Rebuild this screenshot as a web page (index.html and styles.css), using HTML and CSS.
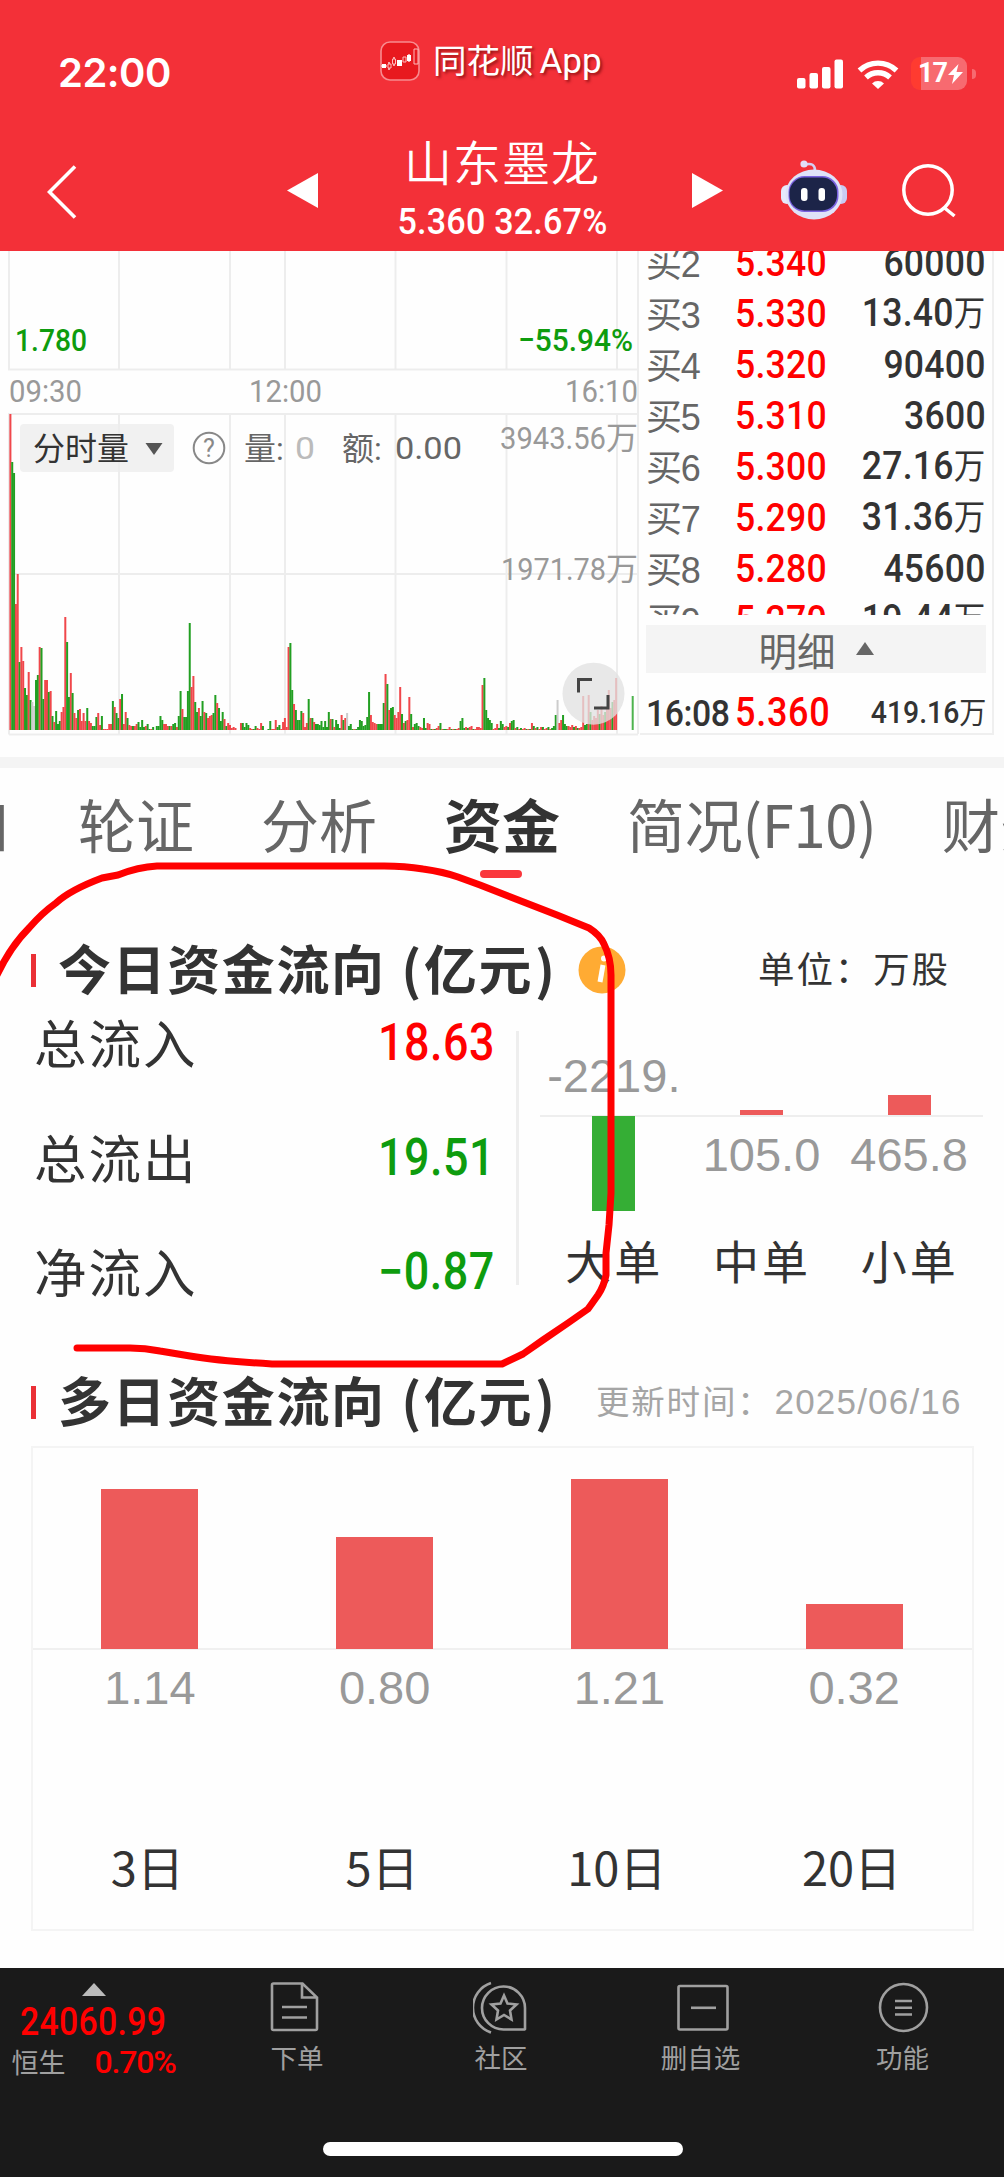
FILE: index.html
```
<!DOCTYPE html>
<html lang="zh-CN">

<head>
    <meta charset="UTF-8">
    <meta name="viewport" content="width=device-width, initial-scale=1.0">
    <title>山东墨龙</title>
    <link rel="stylesheet" href="styles.css">
</head>

<body>
    <div class="page">
        <header class="header">
            <div class="status">
                <span class="clock">22:00</span>
                <div class="brand">
                    <svg class="brand-icon" width="40" height="40" viewBox="0 0 40 40">
                        <rect x="1" y="1" width="38" height="38" rx="9" fill="#e8191f" stroke="#f88a8e" stroke-width="1.6" />
                        <path d="M1 25h6M9 21v8M14 16v9M29 13v8" stroke="#fff" stroke-width="1.2" />
                        <path d="M2 23h4v4H2zM17 19h5v6h-5zM27 14h4v6h-4z" fill="#fff" />
                        <path d="M8 23h3v4H8zM12.500 18h3v5h-3zM23 16h3v5h-3zM34 8h4v15h-4z" fill="#e8191f" stroke="#fbb" stroke-width="1" />
                    </svg>
                    <span class="brand-name">同花顺<b>App</b></span>
                </div>
                <div class="signals">
                    <svg width="46" height="30" viewBox="0 0 46 30" fill="#fff">
                        <rect x="0" y="19" width="8.500" height="10.500" rx="2" />
                        <rect x="12.500" y="14" width="8.500" height="15.500" rx="2" />
                        <rect x="25" y="8" width="8.500" height="21.500" rx="2" />
                        <rect x="37.500" y="0.500" width="8.500" height="29" rx="2" />
                    </svg>
                    <svg class="wifi" width="42" height="30" viewBox="0 0 42 30" fill="none" stroke="#fff" stroke-width="5.400">
                        <path d="M2.500 11.500a27 27 0 0 1 37 0" />
                        <path d="M9 18.500a17.500 17.500 0 0 1 24 0" />
                        <path d="M15 24.500a8.500 8.500 0 0 1 12 0L21 30z" fill="#fff" stroke="none" />
                    </svg>
                    <div class="battery">
                        <span>17</span>
                        <svg width="15" height="20" viewBox="0 0 15 20"><path d="M10.500 0L0 11h6L4 20 15 8H8.500z" fill="#fff" /></svg>
                    </div>
                </div>
            </div>
            <nav class="navbar">
                <svg class="back" width="30" height="54" viewBox="0 0 30 54" fill="none" stroke="#fff" stroke-width="3.600"><path d="M28 1.500L2.500 27 28 52.500" /></svg>
                <svg class="prev" width="31" height="35" viewBox="0 0 31 35"><path d="M31 0v35L0 17.500z" fill="#fff" /></svg>
                <div class="stock">
                    <h1>山东墨龙</h1>
                    <p>5.360 32.67%</p>
                </div>
                <svg class="next" width="31" height="35" viewBox="0 0 31 35"><path d="M0 0v35l31-17.500z" fill="#fff" /></svg>
                <svg class="robot" width="66" height="60" viewBox="0 0 66 60">
                    <path d="M24 4.500q10-2.500 10 6" fill="none" stroke="#d5cdf2" stroke-width="2.600" />
                    <circle cx="23" cy="4" r="3.600" fill="#e3def8" />
                    <rect x="0" y="25" width="12" height="19" rx="6" fill="#e6e9fb" />
                    <rect x="54" y="25" width="12" height="19" rx="6" fill="#c9cbf3" />
                    <ellipse cx="33" cy="34.500" rx="28.500" ry="25" fill="#dfe2f8" />
                    <rect x="7.500" y="16" width="50" height="36" rx="16" fill="#7a62e0" />
                    <rect x="8.500" y="17.500" width="47.500" height="33" rx="15" fill="#1c2448" />
                    <rect x="20" y="28" width="6.500" height="13" rx="3" fill="#fff" />
                    <rect x="37.500" y="28" width="6.500" height="13" rx="3" fill="#fff" />
                </svg>
                <svg class="search" width="56" height="56" viewBox="0 0 56 56" fill="none" stroke="#fff" stroke-width="3.500">
                    <circle cx="26" cy="26" r="24.200" />
                    <path d="M42 43.500L52.500 52" />
                </svg>
            </nav>
        </header>

        <section class="market">
            <svg class="minute-chart" width="640" height="487" viewBox="0 251 640 487">
                <path class="grid-line" d="M9 251V369.500H638M119 251V369M230 251V369M285 251V369M395.500 251V369M506.500 251V369M617 251V369" />
                <path class="grid-line" d="M9 734.500V414H638M9 574H638M9 734.500H638M119 414V734M230 414V734M285 414V734M395.500 414V734M506.500 414V734M617 414V734M638 251V734" />
                <g class="down">
                    <text x="15" y="350.500" textLength="72" lengthAdjust="spacingAndGlyphs">1.780</text>
                    <text x="518" y="350.500" textLength="115" lengthAdjust="spacingAndGlyphs">−55.94%</text>
                </g>
                <g class="axis">
                    <text x="9" y="401.500" textLength="73" lengthAdjust="spacingAndGlyphs">09:30</text>
                    <text x="249" y="401.500" textLength="73" lengthAdjust="spacingAndGlyphs">12:00</text>
                    <text x="565" y="401.500" textLength="73" lengthAdjust="spacingAndGlyphs">16:10</text>
                    <text x="500" y="448.500" textLength="106" lengthAdjust="spacingAndGlyphs">3943.56</text>
                    <text x="606" y="449">万</text>
                    <text x="501" y="580" textLength="105" lengthAdjust="spacingAndGlyphs">1971.78</text>
                    <text x="606" y="580">万</text>
                </g>
                <g id="volume"></g>
                <rect x="20" y="424" width="154" height="48" rx="4" fill="#f1f1f1" />
                <path class="grid-line" d="M119 424V472" />
                <text class="picker" x="33" y="460">分时量</text>
                <path d="M145.500 443h17l-8.500 12z" fill="#555" />
                <circle cx="209" cy="448" r="15.300" fill="none" stroke="#888" stroke-width="2" />
                <text class="help" x="209" y="457" text-anchor="middle">?</text>
                <g class="stats">
                    <text x="244" y="460">量:</text>
                    <text x="295" y="459" textLength="20" lengthAdjust="spacingAndGlyphs" class="empty">0</text>
                    <text x="342" y="460">额:</text>
                    <text x="395" y="459" textLength="67" lengthAdjust="spacingAndGlyphs">0.00</text>
                </g>
                <circle cx="593.500" cy="693.700" r="31" fill="#e2e2e2" fill-opacity="0.780" />
                <path d="M592 679.500H578.500V692.500M608 695V708H594" fill="none" stroke="#444" stroke-width="3" />
            </svg>

            <div class="orders">
                <div class="order-list">
                    <div class="order"><span class="level">买2</span><span class="price">5.340</span><span class="amount">60000</span></div>
                    <div class="order"><span class="level">买3</span><span class="price">5.330</span><span class="amount">13.40<i>万</i></span></div>
                    <div class="order"><span class="level">买4</span><span class="price">5.320</span><span class="amount">90400</span></div>
                    <div class="order"><span class="level">买5</span><span class="price">5.310</span><span class="amount">3600</span></div>
                    <div class="order"><span class="level">买6</span><span class="price">5.300</span><span class="amount">27.16<i>万</i></span></div>
                    <div class="order"><span class="level">买7</span><span class="price">5.290</span><span class="amount">31.36<i>万</i></span></div>
                    <div class="order"><span class="level">买8</span><span class="price">5.280</span><span class="amount">45600</span></div>
                    <div class="order"><span class="level">买9</span><span class="price">5.270</span><span class="amount">19.44<i>万</i></span></div>
                </div>
                <div class="detail">明细<svg width="18" height="13" viewBox="0 0 18 13"><path d="M9 0l9 13H0z" fill="#666" /></svg></div>
                <div class="order trade"><span class="time">16:08</span><span class="price">5.360</span><span class="amount">419.16<i>万</i></span></div>
            </div>
        </section>

        <div class="tabs">
            <span>盘口</span>
            <span>轮证</span>
            <span>分析</span>
            <span class="active">资金</span>
            <span class="wide">简况(F10)</span>
            <span>财务</span>
        </div>

        <section class="today">
            <div class="heading">
                <h2>今日资金流向 <b>(</b>亿元<b>)</b></h2>
                <svg class="info" width="48" height="48" viewBox="0 0 48 48">
                    <circle cx="24" cy="24" r="23.500" fill="#ffab33" />
                    <path d="M25 19l-3 17" stroke="#fff" stroke-width="5" />
                    <circle cx="26" cy="12.500" r="3" fill="#fff" />
                </svg>
                <span class="unit">单位：万股</span>
            </div>
            <div class="flow">
                <dl class="totals">
                    <div><dt>总流入</dt><dd class="red">18.63</dd></div>
                    <div><dt>总流出</dt><dd>19.51</dd></div>
                    <div><dt>净流入</dt><dd>−0.87</dd></div>
                </dl>
                <div class="sizes">
                    <div class="size">
                        <div class="above"><span>-2219.</span></div>
                        <div class="below"><div class="bar green" style="height: 95px"></div></div>
                        <p>大单</p>
                    </div>
                    <div class="size">
                        <div class="above"><div class="bar" style="height: 5px"></div></div>
                        <div class="below"><span>105.0</span></div>
                        <p>中单</p>
                    </div>
                    <div class="size">
                        <div class="above"><div class="bar" style="height: 20px"></div></div>
                        <div class="below"><span>465.8</span></div>
                        <p>小单</p>
                    </div>
                </div>
            </div>
        </section>

        <section class="multi">
            <div class="heading">
                <h2>多日资金流向 <b>(</b>亿元<b>)</b></h2>
                <span class="updated">更新时间：<b>2025/06/16</b></span>
            </div>
            <div class="days">
                <div class="day"><div class="column"><div class="fill" style="height: 160px"></div></div><span>1.14</span><p>3日</p></div>
                <div class="day"><div class="column"><div class="fill" style="height: 112px"></div></div><span>0.80</span><p>5日</p></div>
                <div class="day"><div class="column"><div class="fill" style="height: 170px"></div></div><span>1.21</span><p>10日</p></div>
                <div class="day"><div class="column"><div class="fill" style="height: 45px"></div></div><span>0.32</span><p>20日</p></div>
            </div>
        </section>

        <footer class="toolbar">
            <div class="tools">
                <div class="index">
                    <svg width="24" height="13" viewBox="0 0 24 13"><path d="M12 0l12 13H0z" fill="#bbb" /></svg>
                    <strong>24060.99</strong>
                    <div class="change"><span>恒生</span><em>0.70%</em></div>
                </div>
                <div class="tool">
                    <svg class="order-icon" width="56" height="54" viewBox="0 0 56 54">
                        <path d="M6.500 2.500h29l14.500 14v31q0 1.500-1.500 1.500H6.500q-1.500 0-1.500-1.500V4q0-1.500 1.500-1.500zM35 3v13.500h14M15 26h25M15 36.500h25" />
                    </svg>
                    下单
                </div>
                <div class="tool">
                    <svg width="56" height="54" viewBox="0 0 56 54">
                        <path d="M51.500 48.500H30.500A21.500 21.500 0 1 1 52 27V48z" />
                        <path d="M18 2A26 26 0 0 0 18 51.500" />
                        <path d="M31 14.500l3.500 8 9 1-6.500 6 1.500 9-7.500-4.500-7.500 4.500 1.500-9-6.500-6 9-1z" />
                    </svg>
                    社区
                </div>
                <div class="tool">
                    <svg class="remove-icon" width="56" height="54" viewBox="0 0 56 54">
                        <rect x="3.500" y="5" width="49" height="43.500" rx="1.500" />
                        <path d="M16 26.800h25" />
                    </svg>
                    删自选
                </div>
                <div class="tool">
                    <svg width="56" height="54" viewBox="0 0 56 54">
                        <circle cx="28.500" cy="26.500" r="23.500" />
                        <path d="M20 20h17M20 26.800h17M20 33.500h17" />
                    </svg>
                    功能
                </div>
            </div>
            <div class="home-bar"></div>
        </footer>

        <!-- hand drawn marker around today's flow -->
        <svg class="marker" width="1004" height="2177" viewBox="0 0 1004 2177">
            <path d="M-4 977Q10 947 29 928Q42 913 56 903Q70 890 102 878L118 875Q138 867 157 866H384Q405 866 423 869Q444 872 458 877L480 885L557 915L589 928Q600 935 604 944Q611 958 611 975V1193L609 1225L606 1253V1275Q604 1286 598 1295L588 1309L568 1323L543 1340L523 1354L502 1364H272Q220 1361 190 1356L160 1351Q145 1348 130 1348H77" />
        </svg>
    </div>

    <script>
        // bar heights per minute, negative = green
        var volume = [
            316, -268, -257, 126, 156, -68, 83, 69, -42, -35, 58, -30, 28, -24, -50, -55, 83, -82, -31, 50,
            50, -38, 39, -14, 8, -19, -6, -9, 18, 23, 113, -88, -33, 57, -37, 17, 12, -20, 21, 9,
            17, 9, -22, 9, 7, -4, -4, -13, 17, 5, -14, 1, 1, 1, 6, 6, -29, 23, -17, -12,
            31, -36, 6, 18, -12, 5, 4, -4, 4, 6, -8, -3, -10, -3, 4, -6, -1, 1, -3, 0,
            -4, -4, -14, -10, 6, 6, 4, -4, 4, -6, -7, 3, -14, -39, 21, -13, -13, -39, -107, 43,
            54, -28, -18, 22, -14, -29, 18, -17, 12, 14, 15, -17, -35, 27, -22, -9, -18, 11, -4, 7,
            5, 2, 3, 2, 0, 0, 7, -7, -3, -7, -5, 2, 1, -1, -4, 2, 1, 7, -4, 0,
            0, -1, -9, 1, 1, 10, -3, -5, 1, 8, 12, 3, 83, -87, -40, 26, -20, -10, -10, -19,
            17, 3, 7, -31, 12, -12, 8, -6, -6, -5, -9, -3, -9, -3, -18, 11, -11, 3, -10, -6,
            -2, 15, -10, 12, 17, -4, -6, -1, 1, -1, -3, -10, -9, -4, -5, -13, -38, 15, 8, 7,
            6, -6, -6, -6, -27, 56, -46, 20, -22, -23, 15, 12, 18, 43, -16, 7, -9, 10, 33, -16,
            3, -6, -7, -4, 3, 2, -12, -2, 7, 6, -1, 1, -1, 2, 4, -7, 1, -1, -1, 1,
            3, -1, 1, -1, 1, 2, -9, -12, -2, 3, -2, 3, 4, -1, 1, 3, 3, 2, 45, -52,
            -20, -12, -10, -7, 1, 2, 6, -2, -9, -6, 3, 4, -3, 7, -9, -10, 2, -3, 1, -2,
            1, 2, -1, 1, -1, 7, -4, 2, -3, 1, 3, -3, 1, 2, -3, 1, -2, -4, -15, 30,
            7, 10, -15, -6, -4, 4, 3, 5, -3, 4, -2, 2, 3, 34, -5, -6, 35, -18, 10, 14,
            12, 20, -16, 24, 15, -18, 22, 40, 22, -28, 30, 52
        ];
        var greyBars = [12, 13, 184, 299];
        var group = document.getElementById("volume");

        function addBar(x, height, color) {
            var bar = document.createElementNS("http://www.w3.org/2000/svg", "rect");
            bar.setAttribute("x", x);
            bar.setAttribute("y", 730 - height);
            bar.setAttribute("width", 2);
            bar.setAttribute("height", height);
            bar.setAttribute("fill", color);
            group.appendChild(bar);
        }

        volume.forEach(function (value, i) {
            var color = value > 0 ? "#f0474b" : "#229f22";
            if (greyBars.indexOf(i) !== -1) {
                color = "#cccccc";
            }
            addBar(9.4 + i * 1.83, Math.abs(value), color);
        });
        addBar(631.7, 34, "#4db34d");
    </script>
</body>

</html>
```
FILE: styles.css
```
* {
    box-sizing: border-box;
}

body {
    margin: 0;
    background-color: #fefefe;
    font-family: "Noto Sans CJK SC", sans-serif;
    color: #333;
}

h1,
h2,
p,
dl,
dd {
    margin: 0;
    font-weight: normal;
}

svg {
    display: block;
    flex: none;
}

b,
i,
em,
strong {
    font-weight: inherit;
    font-style: normal;
}

.page {
    position: relative;
    width: 1004px;
    height: 2177px;
    overflow: hidden;
}

/* header */
.header {
    height: 251px;
    background-color: #f33038;
    color: white;
}

.status {
    height: 120px;
    display: flex;
    align-items: flex-start;
}

.clock {
    width: 322px;
    margin: 48px 0 0 58px;
    font: 600 40px/50px Inter, sans-serif;
    letter-spacing: -0.5px;
}

.brand {
    display: flex;
    align-items: center;
    width: 417px;
    margin-top: 39px;
}

.brand-name {
    margin-left: 13px;
    font-size: 33.5px;
    line-height: 40px;
    text-shadow: 2px 2px 3px rgba(90, 0, 0, 0.6);
}

.brand-name b {
    margin-left: 6px;
    font-family: Roboto, sans-serif;
    font-size: 35px;
}

.signals {
    display: flex;
    align-items: center;
    margin-top: 57px;
}

.wifi {
    margin-left: 14px;
}

.battery {
    display: flex;
    align-items: center;
    gap: 1px;
    width: 56px;
    height: 33px;
    margin-left: 12px;
    padding-left: 7px;
    border-radius: 9px;
    background: linear-gradient(90deg, #ff3b30 10px, #f76a70 10px);
    font: bold 27px/33px Roboto, sans-serif;
    letter-spacing: -1px;
}

.battery::after {
    content: "";
    flex: none;
    width: 4px;
    height: 10px;
    margin-left: 8px;
    border-radius: 0 5px 5px 0;
    background-color: #f76a70;
}

.navbar {
    display: flex;
    align-items: flex-start;
}

.back {
    margin: 45px 0 0 47px;
}

.prev {
    margin: 53px 0 0 210px;
}

.stock {
    width: 374px;
    margin-top: 12px;
    text-align: center;
    padding-right: 5px;
}

.stock h1 {
    font-size: 48px;
    line-height: 56px;
    font-weight: 350;
    letter-spacing: 1px;
    margin-left: -1px;
}

.stock p {
    margin-top: 13px;
    font: 500 37.5px/40px Roboto, sans-serif;
    letter-spacing: 0.2px;
    transform: scaleX(0.91);
}

.next {
    margin: 53px 0 0;
}

.robot {
    margin: 40px 0 0 58px;
}

.search {
    margin: 44px 0 0 55px;
}

/* minute chart and order book */
.market {
    display: flex;
    height: 517px;
    border-bottom: 11px solid #f4f4f4;
}

.grid-line {
    fill: none;
    stroke: #ededed;
    stroke-width: 2;
}

.minute-chart text {
    font-family: Roboto, "Noto Sans CJK SC", sans-serif;
    font-size: 32px;
}

.down {
    fill: #0e9c0e;
    font-weight: 500;
}

.axis {
    fill: #999;
}

.picker {
    fill: #333;
}

.minute-chart .help {
    fill: #888;
    font-size: 25px;
}

.stats {
    fill: #666;
}

.empty {
    fill: #bbb;
}

.orders {
    width: 354px;
    height: 484px;
    padding: 0 6px;
    border-right: 2px solid #efefef;
    border-bottom: 2px solid #efefef;
}

.order-list {
    display: flex;
    flex-direction: column;
    height: 364px;
    margin-bottom: 10px;
    overflow: hidden;
}

.order-list .order:first-child {
    margin-top: -13px;
}

.order {
    display: flex;
    flex: none;
    align-items: center;
    height: 50.9px;
    line-height: 50px;
    font-family: Roboto, "Noto Sans CJK SC", sans-serif;
    font-weight: 500;
    white-space: nowrap;
}

.level {
    width: 89px;
    padding-top: 4px;
    font-family: "Liberation Sans", "Noto Sans CJK SC", sans-serif;
    font-size: 36px;
    font-weight: 400;
    letter-spacing: -1.2px;
    color: #666;
}

/* figures are drawn a little condensed */
.price,
.amount,
.time {
    font-size: 39.5px;
    letter-spacing: 0.3px;
    transform: scaleX(0.9);
    transform-origin: left;
}

.price {
    color: #f00;
}

.amount {
    margin-left: auto;
    transform-origin: right;
}

.amount i {
    font-size: 35px;
    font-weight: 400;
}

.detail {
    display: flex;
    align-items: center;
    justify-content: center;
    gap: 20px;
    height: 48px;
    background-color: #f4f4f4;
    color: #666;
    font-size: 38.5px;
    line-height: 46px;
}

.detail span {
    position: relative;
}

.detail svg {
    margin-top: -1px;
}

.trade {
    height: 79px;
}

.time {
    width: 89px;
    font-size: 37.5px;
    letter-spacing: -0.5px;
}

.trade .price {
    font-size: 40px;
    letter-spacing: 0.8px;
}

.trade .amount {
    font-size: 31.5px;
    letter-spacing: 0;
}

.trade .amount i {
    font-size: 30px;
}

/* tabs */
.tabs {
    display: flex;
    gap: 67px;
    height: 110px;
    margin-left: -105px;
    color: #666;
    font-size: 58px;
    line-height: 110px;
    white-space: nowrap;
}

.tabs .wide {
    width: 248px;
    letter-spacing: -0.3px;
}

.tabs .active {
    position: relative;
    color: #333;
    font-weight: bold;
}

.tabs .active::after {
    content: "";
    position: absolute;
    left: 36px;
    bottom: 0;
    width: 42px;
    height: 8px;
    border-radius: 4px;
    background-color: #fa373c;
}

/* section headings */
.heading {
    display: flex;
    align-items: center;
    height: 60px;
    padding-left: 31px;
}

.heading::before {
    content: "";
    width: 5px;
    height: 33px;
    background-color: #ea3036;
}

.heading h2 {
    width: 502px;
    margin: -6px 0 0 22px;
    font-size: 53px;
    line-height: 60px;
    font-weight: bold;
    letter-spacing: 1.6px;
    white-space: nowrap;
}

.heading h2 b {
    margin: 0 1px 0 2px;
}

.info {
    margin-left: 18px;
}

.unit {
    margin: -5px 0 0 132px;
    font-size: 36.5px;
    letter-spacing: 1.9px;
    white-space: nowrap;
}

.updated {
    margin: -6px 0 0 36px;
    font-size: 33.5px;
    letter-spacing: 1.8px;
    color: #a5a5a5;
    white-space: nowrap;
}

.updated b {
    margin-left: 2px;
    font-family: "Liberation Sans", sans-serif;
    font-size: 35px;
    letter-spacing: 1.2px;
}

/* today's flow */
.today {
    padding-top: 62px;
}

.flow {
    display: flex;
    height: 372px;
}

.totals {
    width: 519px;
    height: 254px;
    margin-top: 31px;
    padding: 0 21px 0 34px;
    border-right: 3px solid #eee;
}

.totals div {
    display: flex;
    justify-content: space-between;
    height: 114.5px;
}

.totals dt {
    margin-top: -30px;
    font-size: 52.5px;
    line-height: 80px;
    letter-spacing: 2px;
}

.totals dd {
    margin-top: -18px;
    font: 500 51px/60px Roboto, sans-serif;
    letter-spacing: 0.6px;
    color: #0e9c0e;
    transform: scaleX(0.88);
    transform-origin: right;
}

.totals .red {
    color: #f00;
}

.sizes {
    display: grid;
    grid-template-columns: repeat(3, 1fr);
    width: 443px;
    margin-left: 21px;
}

.size {
    text-align: center;
    font: 47px/54px "Liberation Sans", sans-serif;
    color: #999;
}

.above {
    display: flex;
    flex-direction: column;
    justify-content: flex-end;
    align-items: center;
    height: 115px;
}

.above span {
    margin-bottom: 12px;
}

.below {
    display: flex;
    justify-content: center;
    height: 115px;
    border-top: 2px solid #eee;
}

.below span {
    margin-top: 11px;
}

.below .bar {
    margin-top: -1px;
}

.bar {
    width: 43px;
    background-color: #ed5a5a;
}

.bar.green {
    background-color: #35ae35;
}

.size p {
    color: #333;
    font: 46px/58px "Noto Sans CJK SC", sans-serif;
    letter-spacing: 3px;
    margin-right: -1px;
}

/* multi day flow */
.days {
    display: grid;
    grid-template-columns: repeat(4, 1fr);
    width: 943px;
    height: 485px;
    margin: 14px 0 0 30.5px;
    border: 2px solid #f4f4f4;
}

.day {
    text-align: center;
    font: 47px/54px "Liberation Sans", sans-serif;
    color: #999;
}

.column {
    display: flex;
    align-items: flex-end;
    justify-content: center;
    height: 202px;
    margin-bottom: 11px;
    border-bottom: 2px solid #f0f0f0;
}

.fill {
    width: 97px;
    margin-bottom: -1px;
    background-color: #ed5a5a;
}

.day p {
    margin-top: 121px;
    margin-right: 5px;
    color: #333;
    font: 47px/60px "Noto Sans CJK SC", sans-serif;
}

/* bottom toolbar */
.toolbar {
    height: 210px;
    margin-top: 37px;
    background-color: #1a1a1a;
    color: #a0a0a0;
}

.tools {
    display: flex;
    height: 174px;
}

.index {
    display: flex;
    flex-direction: column;
    align-items: center;
    width: 187px;
    padding-top: 15px;
    font-family: Roboto, sans-serif;
    font-weight: 500;
}

.index strong {
    margin-top: 5px;
    font-size: 38px;
    line-height: 42px;
    letter-spacing: 0.3px;
    color: #f00;
    transform: scaleX(0.89);
}

.change {
    display: flex;
    gap: 29px;
    line-height: 38px;
}

.change span {
    font-family: "Noto Sans CJK SC", sans-serif;
    font-size: 27px;
    font-weight: 400;
}

.change em {
    font-size: 32px;
    letter-spacing: -1.2px;
    color: #f00;
}

.tool {
    display: flex;
    flex-direction: column;
    align-items: center;
    width: 202px;
    padding-top: 13px;
    font-size: 26.5px;
    line-height: 36px;
}

.tool:nth-child(2) {
    width: 220px;
}

.tool:nth-child(3) {
    width: 188px;
}

.tool:nth-child(4) {
    width: 211px;
}

.tool:nth-child(5) {
    width: 193px;
}

.tool svg {
    margin-bottom: 4px;
    fill: none;
    stroke: #a0a0a0;
    stroke-width: 2.6;
}

.order-icon {
    margin-left: -4px;
}

.remove-icon {
    margin-left: 5px;
}

.home-bar {
    width: 360px;
    height: 14px;
    margin-left: 323px;
    border-radius: 7px;
    background-color: white;
}

.marker {
    position: absolute;
    top: 0;
    left: 0;
    fill: none;
    stroke: #f00;
    stroke-width: 7;
    stroke-linecap: round;
    stroke-linejoin: round;
    pointer-events: none;
}
```
